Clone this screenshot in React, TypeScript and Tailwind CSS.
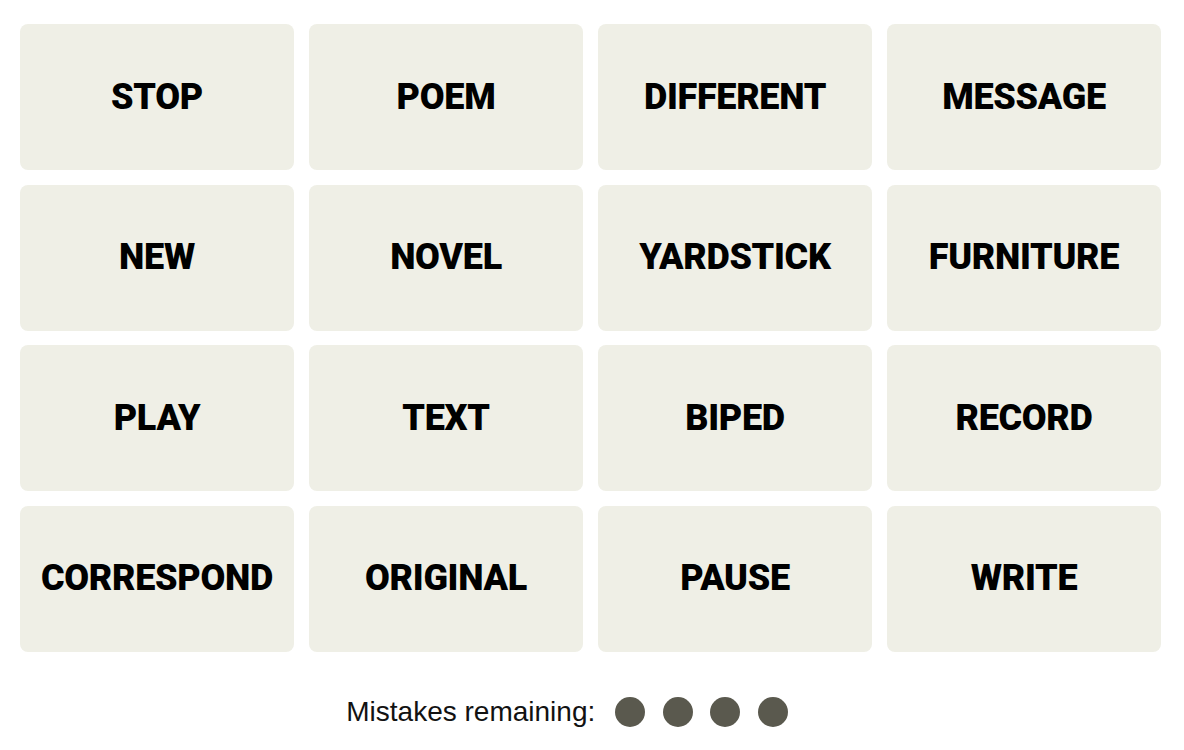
import React from "react";

const words = [
  "STOP", "POEM", "DIFFERENT", "MESSAGE",
  "NEW", "NOVEL", "YARDSTICK", "FURNITURE",
  "PLAY", "TEXT", "BIPED", "RECORD",
  "CORRESPOND", "ORIGINAL", "PAUSE", "WRITE",
];

export default function App() {
  return (
    <div className="w-[1184px] h-[750px] bg-white overflow-hidden" style={{ fontFamily: "Roboto, 'Liberation Sans', sans-serif" }}>
      <div className="pl-[20px] pt-[24px]">
        <div className="grid grid-cols-[repeat(4,274px)] auto-rows-[146px] gap-x-[15px] gap-y-[14.5px]">
          {words.map((w) => (
            <div key={w} className="bg-[#efefe6] rounded-[8px] flex items-center justify-center">
              <span className="text-[36px] font-black text-black leading-none tracking-[-0.3px] -mt-[1px]">{w}</span>
            </div>
          ))}
        </div>
      </div>
      <div className="flex items-center justify-center pr-[50px] mt-[44px] h-[32px]">
        <span className="text-[28px] text-[#121212] leading-none" style={{ fontFamily: "'Liberation Sans', sans-serif" }}>Mistakes remaining:</span>
        <div className="flex gap-[17.5px] ml-[20px]">
          {[0, 1, 2, 3].map((i) => (
            <div key={i} className="w-[30px] h-[30px] rounded-full bg-[#5a594e]" />
          ))}
        </div>
      </div>
    </div>
  );
}
